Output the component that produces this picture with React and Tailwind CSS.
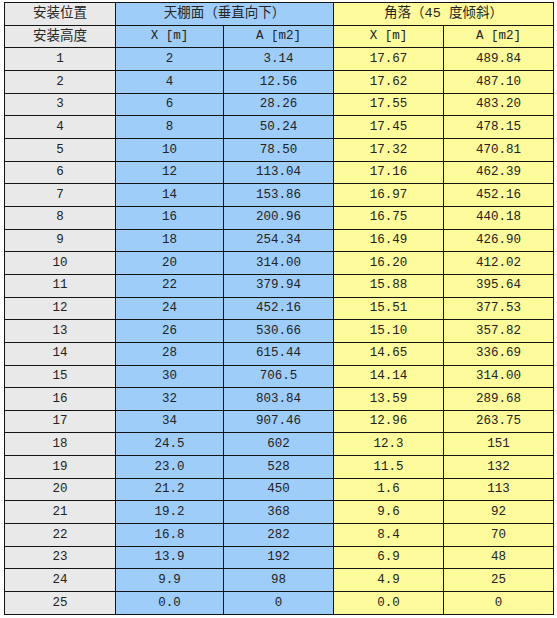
import React from 'react';

const rows = [
    ['1', '2', '3.14', '17.67', '489.84'],
    ['2', '4', '12.56', '17.62', '487.10'],
    ['3', '6', '28.26', '17.55', '483.20'],
    ['4', '8', '50.24', '17.45', '478.15'],
    ['5', '10', '78.50', '17.32', '470.81'],
    ['6', '12', '113.04', '17.16', '462.39'],
    ['7', '14', '153.86', '16.97', '452.16'],
    ['8', '16', '200.96', '16.75', '440.18'],
    ['9', '18', '254.34', '16.49', '426.90'],
    ['10', '20', '314.00', '16.20', '412.02'],
    ['11', '22', '379.94', '15.88', '395.64'],
    ['12', '24', '452.16', '15.51', '377.53'],
    ['13', '26', '530.66', '15.10', '357.82'],
    ['14', '28', '615.44', '14.65', '336.69'],
    ['15', '30', '706.5', '14.14', '314.00'],
    ['16', '32', '803.84', '13.59', '289.68'],
    ['17', '34', '907.46', '12.96', '263.75'],
    ['18', '24.5', '602', '12.3', '151'],
    ['19', '23.0', '528', '11.5', '132'],
    ['20', '21.2', '450', '1.6', '113'],
    ['21', '19.2', '368', '9.6', '92'],
    ['22', '16.8', '282', '8.4', '70'],
    ['23', '13.9', '192', '6.9', '48'],
    ['24', '9.9', '98', '4.9', '25'],
    ['25', '0.0', '0', '0.0', '0'],
];

const cell = 'border border-[#141414] p-0 text-center align-middle h-[22.67px] leading-none';
const gray = 'bg-[#e9e9e9]';
const blue = 'bg-[#9fcdfa]';
const yellow = 'bg-[#fdfb9c]';
const cjk = 'font-normal text-[13.5px] text-[#262626]';

const App = () => {
    return (
        <div className="bg-white w-[557px] h-[618px] pt-[2px] pl-[4px]">
            <table
                className="border-collapse table-fixed w-[549px] text-[#222] text-[12.5px]"
                style={{ fontFamily: '"Liberation Mono", "Noto Sans CJK SC", monospace' }}
            >
                <colgroup>
                    <col className="w-[111px]" />
                    <col className="w-[108px]" />
                    <col className="w-[110px]" />
                    <col className="w-[110px]" />
                    <col className="w-[110px]" />
                </colgroup>
                <thead>
                    <tr>
                        <th className={`${cell} ${gray} ${cjk}`}>安装位置</th>
                        <th colSpan={2} className={`${cell} ${blue} ${cjk}`}>天棚面（垂直向下）</th>
                        <th colSpan={2} className={`${cell} ${yellow} ${cjk}`}>角落（45 度倾斜）</th>
                    </tr>
                    <tr>
                        <th className={`${cell} ${gray} ${cjk}`}>安装高度</th>
                        <th className={`${cell} ${blue} font-normal`}>X [m]</th>
                        <th className={`${cell} ${blue} font-normal`}>A [m2]</th>
                        <th className={`${cell} ${yellow} font-normal`}>X [m]</th>
                        <th className={`${cell} ${yellow} font-normal`}>A [m2]</th>
                    </tr>
                </thead>
                <tbody>
                    {rows.map(r => (
                        <tr key={r[0]}>
                            <td className={`${cell} ${gray}`}>{r[0]}</td>
                            <td className={`${cell} ${blue}`}>{r[1]}</td>
                            <td className={`${cell} ${blue}`}>{r[2]}</td>
                            <td className={`${cell} ${yellow}`}>{r[3]}</td>
                            <td className={`${cell} ${yellow}`}>{r[4]}</td>
                        </tr>
                    ))}
                </tbody>
            </table>
        </div>
    );
};

export default App;
